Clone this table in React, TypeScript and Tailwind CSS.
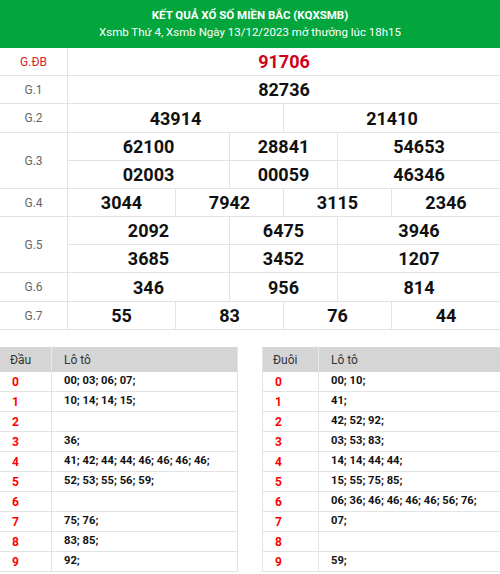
import React from 'react';

type PrizeRow = {
  label: string;
  special?: boolean;
  grid: string;
  lines: string[][];
  tall?: boolean;
};

const prizes: PrizeRow[] = [
  { label: 'G.ĐB', special: true, grid: 'grid-cols-1', lines: [['91706']] },
  { label: 'G.1', grid: 'grid-cols-1', lines: [['82736']] },
  { label: 'G.2', grid: 'grid-cols-2', lines: [['43914', '21410']], tall: true },
  {
    label: 'G.3',
    grid: 'grid-cols-[162px_108px_1fr]',
    lines: [
      ['62100', '28841', '54653'],
      ['02003', '00059', '46346']
    ]
  },
  { label: 'G.4', grid: 'grid-cols-4', lines: [['3044', '7942', '3115', '2346']] },
  {
    label: 'G.5',
    grid: 'grid-cols-[162px_108px_1fr]',
    lines: [
      ['2092', '6475', '3946'],
      ['3685', '3452', '1207']
    ]
  },
  { label: 'G.6', grid: 'grid-cols-[162px_108px_1fr]', lines: [['346', '956', '814']], tall: true },
  { label: 'G.7', grid: 'grid-cols-4', lines: [['55', '83', '76', '44']] }
];

const dau = [
  '00; 03; 06; 07;',
  '10; 14; 14; 15;',
  '',
  '36;',
  '41; 42; 44; 44; 46; 46; 46; 46;',
  '52; 53; 55; 56; 59;',
  '',
  '75; 76;',
  '83; 85;',
  '92;'
];

const duoi = [
  '00; 10;',
  '41;',
  '42; 52; 92;',
  '03; 53; 83;',
  '14; 14; 44; 44;',
  '15; 55; 75; 85;',
  '06; 36; 46; 46; 46; 46; 56; 76;',
  '07;',
  '',
  '59;'
];

const PrizeTableRow: React.FC<{ row: PrizeRow }> = ({ row }) => (
  <div className="flex border-b border-[#e3e3e3]">
    <div
      className={`w-[68px] shrink-0 flex items-center justify-center border-r border-[#e3e3e3] text-[12px] ${
        row.special ? 'text-[#d8232a]' : 'text-[#666]'
      }`}
    >
      {row.label}
    </div>
    <div className="flex-1 flex flex-col">
      {row.lines.map((line, i) => (
        <div
          key={i}
          className={`grid ${row.grid} ${row.tall ? 'h-[28px]' : 'h-[27px]'} ${
            i < row.lines.length - 1 ? 'border-b border-[#e3e3e3]' : ''
          } ${row.lines.length > 1 && i === 0 ? 'h-[28px]' : ''}`}
        >
          {line.map((num, j) => (
            <div
              key={j}
              className={`flex items-center justify-center font-bold text-[18px] ${
                j < line.length - 1 ? 'border-r border-[#e3e3e3]' : ''
              } ${row.special ? 'text-[#d0021b]' : 'text-[#111]'}`}
            >
              {num}
            </div>
          ))}
        </div>
      ))}
    </div>
  </div>
);

const LotoTable: React.FC<{
  title: string;
  values: string[];
  firstCol: string;
  side: string;
}> = ({ title, values, firstCol, side }) => (
  <div className={`w-[238px] ${side} border-[#e3e3e3]`}>
    <div className="flex h-[25px] bg-[#d5d5d5] text-[12px] text-[#333]">
      <div className={`${firstCol} shrink-0 flex items-center pl-[10px] border-r border-[#e8e8e8]`}>
        {title}
      </div>
      <div className="flex-1 flex items-center pl-[12px]">Lô tô</div>
    </div>
    {values.map((v, i) => (
      <div key={i} className="flex h-[20px] border-b border-[#e3e3e3] text-[11.2px] font-bold">
        <div
          className={`${firstCol} shrink-0 flex items-center pl-[12px] border-r border-[#e3e3e3] text-[12px] text-[#ff0000]`}
        >
          {i}
        </div>
        <div className="flex-1 flex items-center pl-[12px] text-[#111] whitespace-nowrap">{v}</div>
      </div>
    ))}
  </div>
);

export default function App() {
  return (
    <div className="w-[500px] h-[574px] overflow-hidden bg-white font-['Roboto',sans-serif]">
      <div className="h-[48px] bg-[#02a63c] flex flex-col items-center pt-[7px] text-white">
        <div className="text-[11.5px] font-bold leading-[16px]">KẾT QUẢ XỔ SỐ MIỀN BẮC (KQXSMB)</div>
        <div className="text-[11.5px] leading-[17px] mt-[1px]">
          Xsmb Thứ 4, Xsmb Ngày 13/12/2023 mở thưởng lúc 18h15
        </div>
      </div>

      <div>
        {prizes.map(row => (
          <PrizeTableRow key={row.label} row={row} />
        ))}
      </div>

      <div className="flex justify-between mt-[17px]">
        <LotoTable title="Đầu" values={dau} firstCol="w-[52px]" side="border-r" />
        <LotoTable title="Đuôi" values={duoi} firstCol="w-[56px]" side="border-l" />
      </div>
    </div>
  );
}
